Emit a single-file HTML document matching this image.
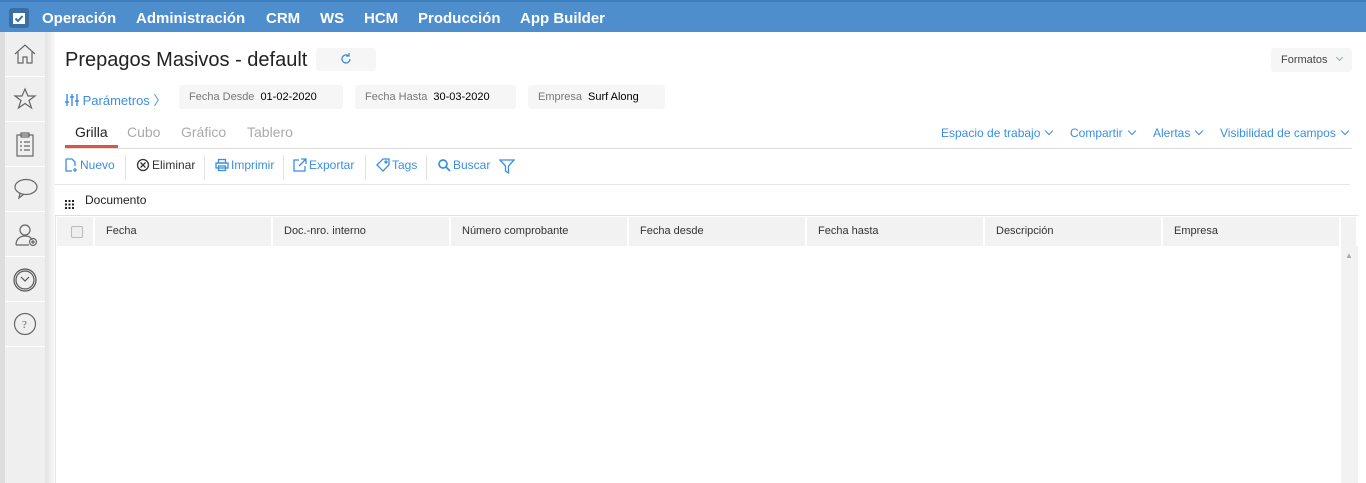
<!DOCTYPE html>
<html><head><meta charset="utf-8"><style>
*{box-sizing:border-box;margin:0;padding:0}
body{width:1366px;height:483px;overflow:hidden;background:#fff;font-family:"Liberation Sans",sans-serif;position:relative}
.top{position:absolute;left:0;top:0;width:1366px;height:32px;background:#4e8ecd;border-top:2px solid #3f7fc0}
.top .logo{position:absolute;left:9px;top:6px;width:20px;height:20px;background:#3a6fa5;border-radius:3px}
.top span{position:absolute;top:8px;color:#fff;font-weight:bold;font-size:15px}
.side{position:absolute;left:0;top:32px;width:45px;height:451px;background:#efefef;border-left:5px solid #ddd}
.shadow{position:absolute;left:45px;top:32px;width:10px;height:451px;background:linear-gradient(to right,#e2e2e2,#fafafa)}
.cell{position:absolute;left:0;width:40px;height:45px;border-bottom:1px solid #fff}
.cell svg{position:absolute;left:8px;top:10px}
.a{position:absolute;white-space:nowrap}
.blue{color:#3b8ee0}
.pill{position:absolute;background:#f6f6f6;border-radius:3px;height:24px;font-size:11px;line-height:24px;padding-left:10px}
.pill i{font-style:normal;color:#777;margin-right:6px}
.tb{position:absolute;top:158px;font-size:12px;color:#3b8ee0;display:flex;align-items:center;gap:2px}
.tb svg{fill:none;stroke:#3b8ee0;stroke-width:1.3}
.sep{position:absolute;top:155px;width:1px;height:25px;background:#e3e3e3}
.hd{position:absolute;top:217px;height:29px;background:#f2f2f2;font-size:11px;color:#333;line-height:29px;padding-left:11px;border-right:2px solid #fff}
.chev{display:inline-block;width:6px;height:6px;border-right:1px solid #3b8ee0;border-bottom:1px solid #3b8ee0;transform:rotate(45deg);margin:0 4px 3px 6px}
</style></head><body>
<div class="top"><div class="logo"><svg width="20" height="20"><rect x="4" y="5" width="12" height="11" fill="#fff"/><path d="M6.5 10.5l2.5 2.5 4.5-5" stroke="#3a6fa5" stroke-width="2" fill="none"/></svg></div>
<span style="left:42px">Operación</span><span style="left:136px">Administración</span><span style="left:266px">CRM</span><span style="left:320px">WS</span><span style="left:364px">HCM</span><span style="left:418px">Producción</span><span style="left:520px">App Builder</span></div>
<div class="side">
<div class="cell" style="top:0"><svg width="24" height="24" fill="none" stroke="#666" stroke-width="1.2"><path d="M2 12L12 3l10 9M5 10v11h5v-6h4v6h5V10"/></svg></div>
<div class="cell" style="top:45px"><svg width="24" height="24" fill="none" stroke="#666" stroke-width="1.2"><path d="M12 2l3 7h7l-6 4.5 2.5 7.5-6.5-4.5-6.5 4.5 2.5-7.5L2 9h7z"/></svg></div>
<div class="cell" style="top:90px"><svg width="24" height="26" fill="none" stroke="#666" stroke-width="1.2"><rect x="4" y="3" width="16" height="21"/><rect x="8" y="1" width="8" height="4"/><path d="M7 10h2M11 10h6M7 14h2M11 14h6M7 18h2M11 18h6"/></svg></div>
<div class="cell" style="top:135px"><svg width="26" height="24" fill="none" stroke="#666" stroke-width="1.2"><ellipse cx="13" cy="10" rx="11" ry="7.5"/><path d="M7 16l-1 5 5-4"/></svg></div>
<div class="cell" style="top:180px"><svg width="26" height="26" fill="none" stroke="#666" stroke-width="1.2"><circle cx="12" cy="8" r="5"/><path d="M3 23c0-6 4-9 9-9s6 2 7 4M3 23h13"/><circle cx="20" cy="20" r="3.5"/><path d="M20 18v4M18 20h4"/></svg></div>
<div class="cell" style="top:225px"><svg width="26" height="26" fill="none" stroke="#555" stroke-width="1.2"><circle cx="12" cy="13" r="11"/><circle cx="12" cy="13" r="9"/><path d="M8 10l4 4 4-4"/></svg></div>
<div class="cell" style="top:270px"><svg width="26" height="26" fill="none" stroke="#666" stroke-width="1.2"><circle cx="12" cy="12" r="10.5"/><text x="9" y="16" font-size="11" fill="#666" stroke="none" font-family="Liberation Serif">?</text></svg></div>
</div>
<div class="shadow"></div>
<div class="a" style="left:65px;top:49px;font-size:20px;color:#222">Prepagos Masivos - default</div>
<div class="a" style="left:316px;top:48px;width:60px;height:23px;background:#f6f6f6;border-radius:3px"><svg width="60" height="23" fill="none" stroke="#3b8ee0" stroke-width="1.3"><path d="M34 11a4 4 0 1 1-1.5-3.2"/><path d="M33 5v3h-3"/></svg></div>
<div class="a" style="left:1271px;top:48px;width:81px;height:24px;background:#f6f6f6;border-radius:3px;font-size:11px;color:#444;line-height:24px;padding-left:10px">Formatos <span class="chev" style="border-color:#8ab;width:5px;height:5px"></span></div>
<div class="a blue" style="left:65px;top:90px;font-size:13px"><svg width="14" height="14" fill="none" stroke="#3b8ee0" stroke-width="1.4" style="vertical-align:-2px"><path d="M2 1v12M7 1v12M12 1v12M0 9h4M5 4h4M10 8h4"/></svg> Parámetros 〉</div>
<div class="pill" style="left:179px;top:85px;width:164px"><i>Fecha Desde</i>01-02-2020</div>
<div class="pill" style="left:355px;top:85px;width:161px"><i>Fecha Hasta</i>30-03-2020</div>
<div class="pill" style="left:528px;top:85px;width:137px"><i>Empresa</i>Surf Along</div>
<div class="a" style="left:75px;top:124px;font-size:14px;color:#222">Grilla</div>
<div class="a" style="left:65px;top:145px;width:53px;height:3px;background:#e0533f"></div>
<div class="a" style="left:127px;top:124px;font-size:14px;color:#aaa">Cubo</div>
<div class="a" style="left:181px;top:124px;font-size:14px;color:#aaa">Gráfico</div>
<div class="a" style="left:247px;top:124px;font-size:14px;color:#aaa">Tablero</div>
<div class="a blue" style="left:941px;top:126px;font-size:12px">Espacio de trabajo<span class="chev"></span></div>
<div class="a blue" style="left:1070px;top:126px;font-size:12px">Compartir<span class="chev"></span></div>
<div class="a blue" style="left:1153px;top:126px;font-size:12px">Alertas<span class="chev"></span></div>
<div class="a blue" style="left:1220px;top:126px;font-size:12px">Visibilidad de campos<span class="chev"></span></div>
<div class="a" style="left:65px;top:148px;width:1287px;height:1px;background:#ddd"></div>
<div class="tb" style="left:64px"><svg width="14" height="14"><path d="M2 1h6l3 3v4M2 1v12h6M11 10v4M9 12h4"/></svg>Nuevo</div><div class="sep" style="left:125px"></div>
<div class="tb" style="left:136px;color:#333"><svg width="14" height="14" style="stroke:#333"><circle cx="7" cy="7" r="5.5"/><path d="M4.5 4.5l5 5M9.5 4.5l-5 5"/></svg>Eliminar</div><div class="sep" style="left:204px"></div>
<div class="tb" style="left:215px"><svg width="14" height="14"><rect x="1" y="5" width="12" height="5"/><rect x="3.5" y="1.5" width="7" height="3.5"/><rect x="3.5" y="8" width="7" height="4.5"/></svg>Imprimir</div><div class="sep" style="left:283px"></div>
<div class="tb" style="left:293px"><svg width="14" height="14"><path d="M6 2H1v11h11V8M8 1h5v5M13 1L6 8"/></svg>Exportar</div><div class="sep" style="left:365px"></div>
<div class="tb" style="left:376px"><svg width="14" height="14"><path d="M1 7l6-6h6v6l-6 6z"/><circle cx="10" cy="4" r="1"/></svg>Tags</div><div class="sep" style="left:426px"></div>
<div class="tb" style="left:437px"><svg width="14" height="14" style="stroke-width:1.7"><circle cx="6" cy="6" r="4"/><path d="M9 9l4 4"/></svg>Buscar</div>
<div class="tb" style="left:499px"><svg width="16" height="16"><path d="M1 2h14l-5.5 6v7l-3-2V8z"/></svg></div>
<div class="a" style="left:55px;top:184px;width:1295px;height:1px;background:#e6e6e6"></div>
<div class="a" style="left:65px;top:196px"><svg width="9" height="9" fill="#222"><rect x="0" y="0" width="2" height="2"/><rect x="3.5" y="0" width="2" height="2"/><rect x="7" y="0" width="2" height="2"/><rect x="0" y="3.5" width="2" height="2"/><rect x="3.5" y="3.5" width="2" height="2"/><rect x="7" y="3.5" width="2" height="2"/><rect x="0" y="7" width="2" height="2"/><rect x="3.5" y="7" width="2" height="2"/><rect x="7" y="7" width="2" height="2"/></svg></div>
<div class="a" style="left:85px;top:193px;font-size:12px;color:#222">Documento</div>
<div class="a" style="left:55px;top:215px;width:1303px;height:1px;background:#e0e0e0"></div>
<div class="a" style="left:55px;top:216px;width:1px;height:267px;background:#e6e6e6"></div>
<div class="hd" style="left:57px;width:38px;padding-left:14px"><div style="margin-top:9px;width:12px;height:12px;border:1px solid #bbb;border-radius:2px;background:#eee"></div></div>
<div class="hd" style="left:95px;width:178px">Fecha</div>
<div class="hd" style="left:273px;width:178px">Doc.-nro. interno</div>
<div class="hd" style="left:451px;width:178px">Número comprobante</div>
<div class="hd" style="left:629px;width:178px">Fecha desde</div>
<div class="hd" style="left:807px;width:178px">Fecha hasta</div>
<div class="hd" style="left:985px;width:178px">Descripción</div>
<div class="hd" style="left:1163px;width:178px">Empresa</div>
<div class="hd" style="left:1341px;width:17px"></div>
<div class="a" style="left:1341px;top:246px;width:17px;height:237px;background:#f2f2f2"></div>
<div class="a" style="left:1345px;top:251px;font-size:8px;color:#aaa">▲</div>
</body></html>
